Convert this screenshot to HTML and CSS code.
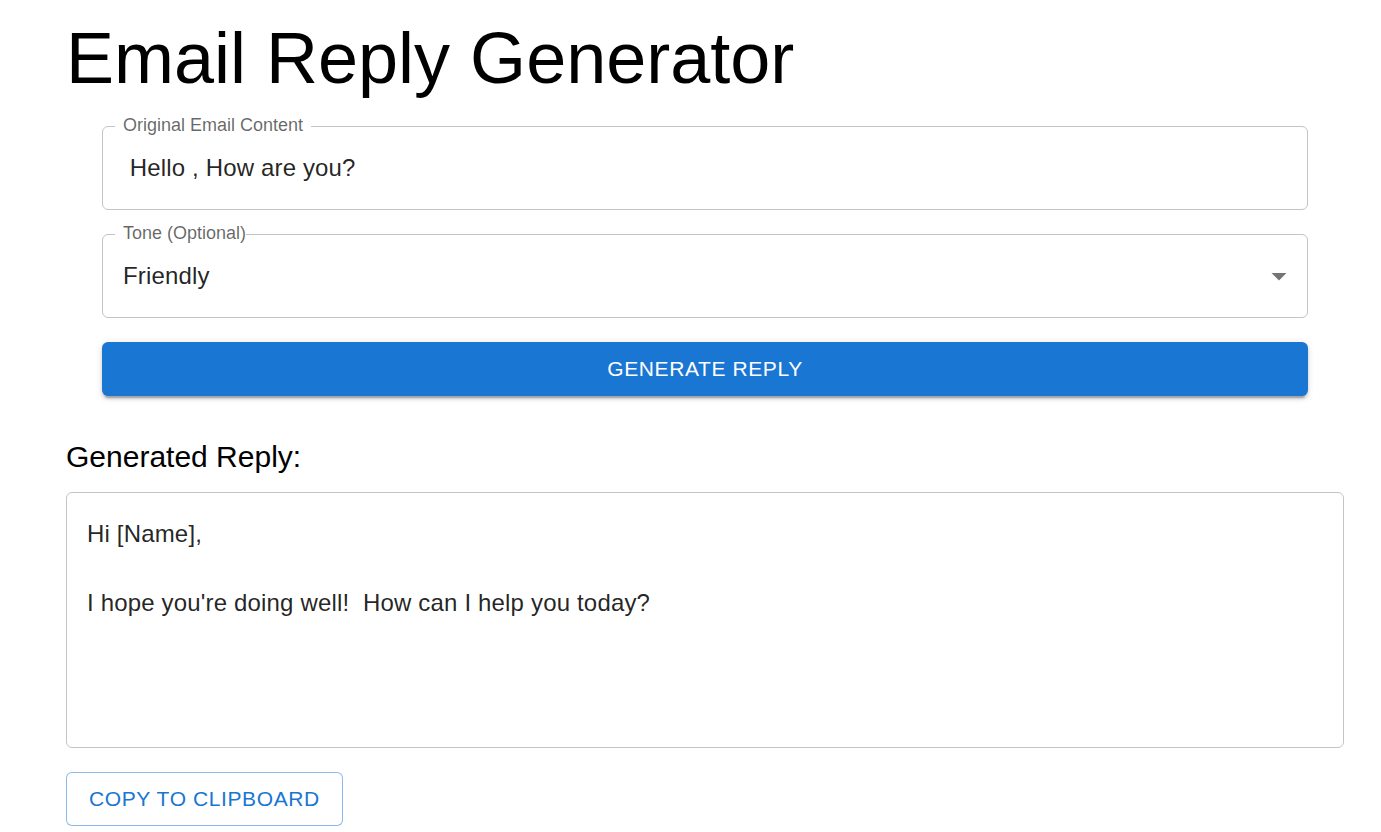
FILE: index.html
```html
<!DOCTYPE html>
<html lang="en">
<head>
<meta charset="utf-8">
<title>Email Reply Generator</title>
<link rel="stylesheet" href="styles.css">
</head>
<body>
<main class="page">
  <h1 class="title">Email Reply Generator</h1>
  <section class="form">
    <div class="field">
      <span class="field-label pad-both">Original Email Content</span>
      <div class="field-value">&nbsp;Hello , How are you?</div>
    </div>
    <div class="field select">
      <span class="field-label pad-left">Tone (Optional)</span>
      <div class="field-value">Friendly</div>
      <svg class="select-arrow" viewBox="0 0 24 24" width="36" height="36" aria-hidden="true"><path d="M7 10l5 5 5-5z"/></svg>
    </div>
    <button class="btn-primary" type="button">Generate Reply</button>
  </section>
  <h2 class="subtitle">Generated Reply:</h2>
  <div class="reply">
    <div class="reply-line">Hi [Name],</div>
    <div class="reply-line">&nbsp;</div>
    <div class="reply-line">I hope you're doing well!&nbsp; How can I help you today?</div>
  </div>
  <button class="btn-outline" type="button">Copy to Clipboard</button>
</main>
</body>
</html>
```

FILE: styles.css
```css
* { box-sizing: border-box; }
html, body { margin: 0; padding: 0; background: #fff; }
body {
  font-family: "Liberation Sans", Arial, sans-serif;
  color: rgba(0, 0, 0, 0.87);
}
.page {
  width: 1278px;
  margin-left: 66px;
  padding-top: 16px;
  display: flex;
  flex-direction: column;
}
.title {
  margin: 0 0 26px;
  font-size: 72px;
  font-weight: 400;
  line-height: 84px;
  color: #000;
}
.form {
  margin: 0 36px 0 36px;
  display: flex;
  flex-direction: column;
  gap: 24px;
}
.field {
  position: relative;
  height: 84px;
  border: 1px solid #c4c4c4;
  border-radius: 6px;
  display: flex;
  align-items: center;
  padding: 0 20px;
}
.field-label {
  position: absolute;
  left: 12px;
  top: -14px;
  font-size: 18px;
  line-height: 24px;
  color: rgba(0, 0, 0, 0.6);
  background: #fff;
}
.pad-both { padding: 0 8px; }
.pad-left { padding: 0 0 0 8px; }
.field-value {
  font-size: 24px;
  line-height: 34.5px;
  letter-spacing: 0.15px;
  color: rgba(0, 0, 0, 0.87);
  white-space: pre;
}
.select-arrow {
  position: absolute;
  right: 10px;
  top: 23px;
  fill: rgba(0, 0, 0, 0.54);
}
.btn-primary {
  height: 54px;
  border: 0;
  border-radius: 6px;
  background: #1976d2;
  color: #fff;
  font-family: inherit;
  font-size: 21px;
  letter-spacing: 0.6px;
  text-transform: uppercase;
  box-shadow: 0 4.5px 1.5px -3px rgba(0,0,0,0.2), 0 3px 3px 0 rgba(0,0,0,0.14), 0 1.5px 7.5px 0 rgba(0,0,0,0.12);
  cursor: pointer;
}
.subtitle {
  margin: 37px 0 11px;
  font-size: 30px;
  font-weight: 400;
  line-height: 48px;
  color: #000;
}
.reply {
  height: 256px;
  border: 1px solid #c4c4c4;
  border-radius: 6px;
  padding: 24px 20px;
}
.reply-line {
  font-size: 24px;
  line-height: 34.5px;
  letter-spacing: 0.17px;
  white-space: pre;
}
.btn-outline {
  align-self: flex-start;
  margin-top: 24px;
  height: 54px;
  padding: 0 22px;
  border: 1px solid rgba(25, 118, 210, 0.5);
  border-radius: 6px;
  background: #fff;
  color: #1976d2;
  font-family: inherit;
  font-size: 21px;
  letter-spacing: 0.6px;
  text-transform: uppercase;
  cursor: pointer;
}
```
